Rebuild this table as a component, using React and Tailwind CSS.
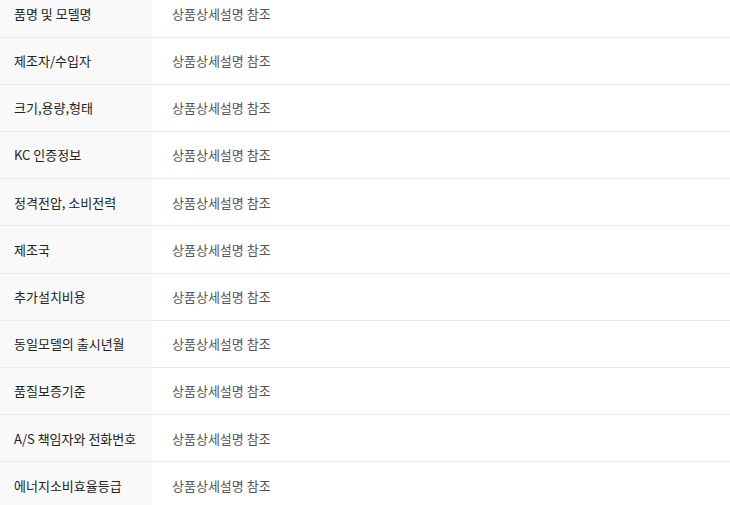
import React from 'react';

const rows = [
  '품명 및 모델명',
  '제조자/수입자',
  '크기,용량,형태',
  'KC 인증정보',
  '정격전압, 소비전력',
  '제조국',
  '추가설치비용',
  '동일모델의 출시년월',
  '품질보증기준',
  'A/S 책임자와 전화번호',
  '에너지소비효율등급',
];

function App() {
  return (
    <div
      className="w-[730px] h-[505px] overflow-hidden bg-white"
      style={{ fontFamily: '"Noto Sans CJK KR", "Noto Sans", sans-serif' }}
    >
      <table className="w-full -mt-[10px] border-collapse text-[13px]">
        <tbody>
          {rows.map((label) => (
            <tr key={label} className="border-b border-[#ebebeb] h-[47.2px]">
              <th className="w-[152px] bg-[#f9f9f9] pl-[14px] text-left font-normal text-[#222]">
                {label}
              </th>
              <td className="pl-[20px] text-[#555]">상품상세설명 참조</td>
            </tr>
          ))}
        </tbody>
      </table>
    </div>
  );
}

export default App;
